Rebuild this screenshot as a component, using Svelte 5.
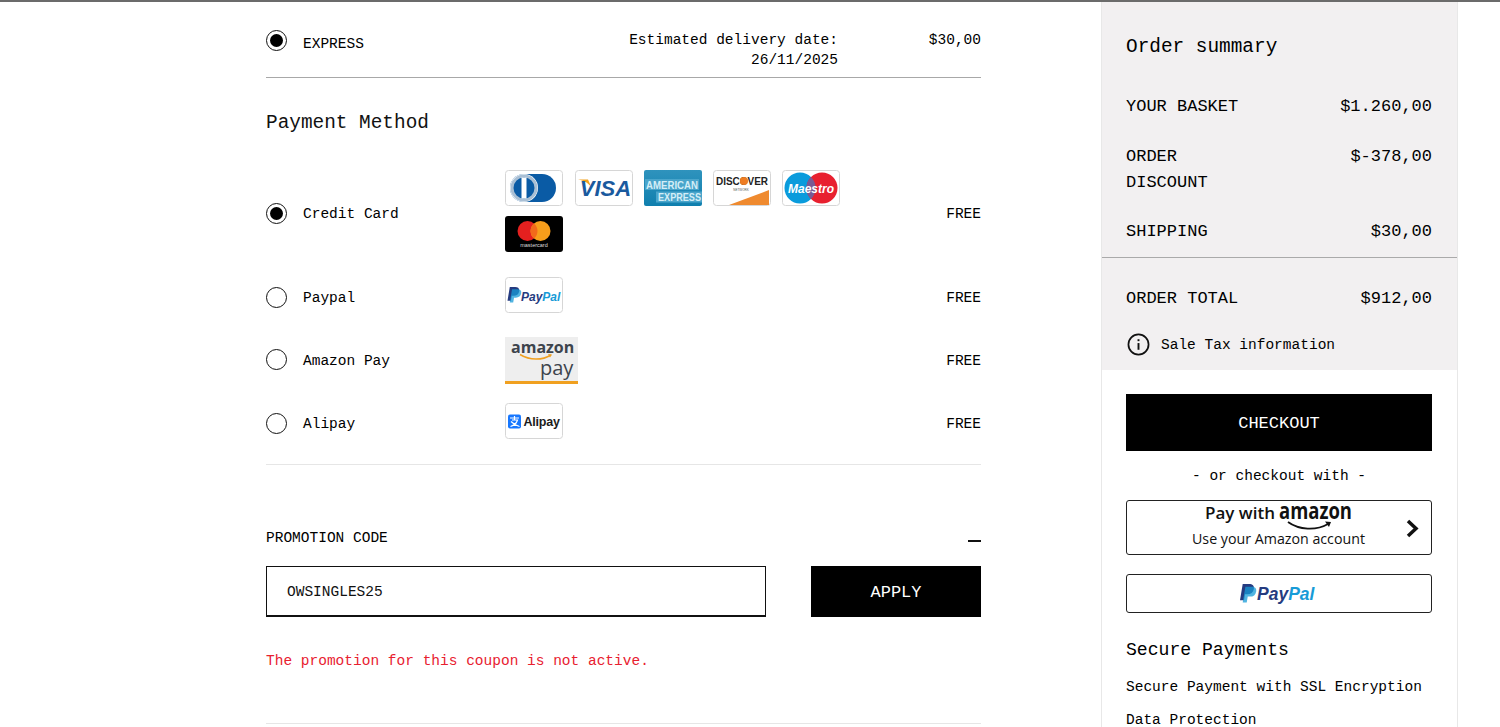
<script>
  const sidebarRows = [
    { label: "YOUR BASKET", value: "$1.260,00" },
    { label: "ORDER DISCOUNT", value: "$-378,00" },
    { label: "SHIPPING", value: "$30,00" },
  ];
  let coupon = $state("OWSINGLES25");
</script>

{#snippet radio(checked)}
  <span class="radio" class:checked></span>
{/snippet}

{#snippet ppMark(x, y, s)}
  <g transform="translate({x} {y}) scale({s})">
    <path d="M3 0h7c4 0 6 2 5.400 5.500C14.800 9.500 12 11.500 8 11.500H5.600L4.500 18H0z" fill="#253b80" />
    <path d="M6 3h7c4 0 5.500 2 5 5.200C17.400 12 14.800 14 11 14H8.600L7.500 20.500H3z" fill="#179bd7" opacity="0.75" />
  </g>
{/snippet}

<div class="page">
  <main class="main">
    <section class="shipping">
      {@render radio(true)}
      <span class="ship-label">EXPRESS</span>
      <span class="ship-date">Estimated delivery date:<br />26/11/2025</span>
      <span class="ship-price">$30,00</span>
    </section>

    <h2 class="method-title">Payment Method</h2>

    <section class="methods">
      <div class="method first">
        <div class="method-name">{@render radio(true)}<span>Credit Card</span></div>
        <div class="logos">
          <svg class="card diners" viewBox="0 0 58 36">
            <rect x="0.500" y="0.500" width="57" height="35" rx="3" fill="#fff" stroke="#d6d6d6" />
            <rect x="5" y="4" width="46" height="28" rx="14" fill="#0a5ba5" />
            <circle cx="19" cy="18" r="14" fill="#fff" />
            <circle cx="19" cy="18" r="12" fill="#0a5ba5" stroke="#a9bfd4" stroke-width="3" />
            <rect x="16.500" y="7.500" width="5" height="21" fill="#fff" />
          </svg>
          <svg class="card" viewBox="0 0 58 36">
            <rect x="0.500" y="0.500" width="57" height="35" rx="3" fill="#fff" stroke="#d6d6d6" />
            <path d="M3 9.500h10l3.500 8c-2-3.500-7-7-13.500-8z" fill="#f2a21f" />
            <text x="30.500" y="26" class="visa">VISA</text>
          </svg>
          <svg class="card" viewBox="0 0 58 36">
            <defs>
              <linearGradient id="amex" x1="0" y1="0" x2="0" y2="1">
                <stop offset="0" stop-color="#2f93bd" />
                <stop offset="1" stop-color="#0f7fae" />
              </linearGradient>
            </defs>
            <rect width="58" height="36" rx="2" fill="url(#amex)" />
            <rect x="1" y="9" width="54" height="11" fill="#4aa5cb" />
            <rect x="12" y="21.500" width="46" height="11" fill="#4aa5cb" />
            <text x="2" y="18.500" class="amex" textLength="52" lengthAdjust="spacingAndGlyphs">AMERICAN</text>
            <text x="14" y="31" class="amex" textLength="43" lengthAdjust="spacingAndGlyphs">EXPRESS</text>
          </svg>
          <svg class="card" viewBox="0 0 58 36">
            <rect x="0.500" y="0.500" width="57" height="35" rx="3" fill="#fff" stroke="#d6d6d6" />
            <text x="3" y="15" class="discover" textLength="52" lengthAdjust="spacingAndGlyphs">DISCOVER</text>
            <circle cx="31" cy="11" r="4" fill="#ee7d23" />
            <text x="28" y="21" class="discover-sub">NETWORK</text>
            <path d="M16 35L56 20v15z" fill="#ef8a2f" />
          </svg>
          <svg class="card" viewBox="0 0 58 36">
            <rect x="0.500" y="0.500" width="57" height="35" rx="3" fill="#fff" stroke="#d6d6d6" />
            <circle cx="18" cy="18" r="15.500" fill="#0a9bdc" />
            <circle cx="40" cy="18" r="15.500" fill="#e8202f" />
            <path d="M29 7a15.500 15.500 0 0 1 0 22a15.500 15.500 0 0 1 0-22z" fill="#7a5a94" />
            <text x="29" y="22.500" class="maestro">Maestro</text>
          </svg>
          <svg class="card" viewBox="0 0 58 36">
            <rect width="58" height="36" rx="3" fill="#000" />
            <circle cx="22.500" cy="15" r="10" fill="#e4201f" />
            <circle cx="35.500" cy="15" r="10" fill="#f79e1b" />
            <path d="M29 7.400a10 10 0 0 1 0 15.200a10 10 0 0 1 0-15.200z" fill="#f26a1b" />
            <text x="29" y="31" class="mc">mastercard</text>
          </svg>
        </div>
        <span class="free">FREE</span>
      </div>

      <div class="method paypal">
        <div class="method-name">{@render radio(false)}<span>Paypal</span></div>
        <div class="logos">
          <svg class="card" viewBox="0 0 58 36">
            <rect x="0.500" y="0.500" width="57" height="35" rx="3" fill="#fff" stroke="#d6d6d6" />
            {@render ppMark(2.500, 10, 0.760)}
            <text x="16" y="23.500" class="pp-small"><tspan fill="#253b80">Pay</tspan><tspan fill="#179bd7">Pal</tspan></text>
          </svg>
        </div>
        <span class="free">FREE</span>
      </div>

      <div class="method amazon">
        <div class="method-name">{@render radio(false)}<span>Amazon Pay</span></div>
        <div class="logos">
          <svg class="amazon-pay" viewBox="0 0 73 47">
            <rect width="73" height="47" fill="#eeeeee" />
            <rect y="44" width="73" height="3" fill="#f0a020" />
            <text x="6" y="16" class="az-word">amazon</text>
            <path d="M15 17.500c10 6 22 6 31 0.500" fill="none" stroke="#f0a020" stroke-width="1.500" />
            <path d="M43 17l4 0.500-2 3z" fill="#f0a020" />
            <text x="35" y="38" class="az-pay">pay</text>
          </svg>
        </div>
        <span class="free">FREE</span>
      </div>

      <div class="method">
        <div class="method-name">{@render radio(false)}<span>Alipay</span></div>
        <div class="logos">
          <svg class="card" viewBox="0 0 58 36">
            <rect x="0.500" y="0.500" width="57" height="35" rx="3" fill="#fff" stroke="#d6d6d6" />
            <rect x="3" y="11.500" width="13" height="14" rx="2" fill="#1677ff" />
            <path d="M5 15h9M9.500 13v4M5.500 23.500c3-1 6-3 7-6.500H7M6 18.500c2 2 5 4 8.500 5" fill="none" stroke="#fff" stroke-width="1.200" />
            <text x="18.500" y="23" class="alipay">Alipay</text>
          </svg>
        </div>
        <span class="free">FREE</span>
      </div>
    </section>

    <section class="promo">
      <div class="promo-head">
        <span>PROMOTION CODE</span>
        <span class="minus"></span>
      </div>
      <div class="promo-form">
        <input class="promo-input" bind:value={coupon} />
        <button class="apply">APPLY</button>
      </div>
      <p class="promo-error">The promotion for this coupon is not active.</p>
    </section>
  </main>

  <aside class="sidebar">
    <div class="summary">
      <h2 class="summary-title">Order summary</h2>
      <div class="summary-rows">
        {#each sidebarRows as row}
          <div class="summary-row">
            <span class="row-label">{row.label}</span>
            <span>{row.value}</span>
          </div>
        {/each}
      </div>
      <div class="summary-total">
        <div class="summary-row">
          <span>ORDER TOTAL</span>
          <span>$912,00</span>
        </div>
        <div class="tax">
          <svg class="info" viewBox="0 0 24 24">
            <circle cx="12" cy="12" r="10.500" fill="none" stroke="#111" stroke-width="1.800" />
            <rect x="11" y="10.500" width="2" height="7" fill="#111" />
            <rect x="11" y="6.500" width="2" height="2" fill="#111" />
          </svg>
          <span>Sale Tax information</span>
        </div>
      </div>
    </div>

    <div class="actions">
      <button class="checkout">CHECKOUT</button>
      <div class="or">- or checkout with -</div>
      <button class="wallet amazon-btn">
        <svg viewBox="0 0 304 53" class="amazon-btn-art">
          <text x="78" y="18" class="btn-pay">Pay with</text>
          <text x="152" y="18" class="btn-amazon" textLength="73" lengthAdjust="spacingAndGlyphs">amazon</text>
          <path d="M161 21c11 8 28 9 40 2" fill="none" stroke="#111" stroke-width="1.800" />
          <path d="M198 20.500l6 0.500-2 5z" fill="#111" />
          <text x="65" y="43" class="btn-use" textLength="173" lengthAdjust="spacingAndGlyphs">Use your Amazon account</text>
          <path d="M281 20l8 7.500-8 7.500" fill="none" stroke="#111" stroke-width="3.500" />
        </svg>
      </button>
      <button class="wallet paypal-btn">
        <svg viewBox="0 0 80 22" class="paypal-art">
          {@render ppMark(1, 1, 0.900)}
          <text x="18" y="17" class="pp-big"><tspan fill="#253b80">Pay</tspan><tspan fill="#179bd7">Pal</tspan></text>
        </svg>
      </button>
      <h3 class="secure-title">Secure Payments</h3>
      <div class="secure-line first-line">Secure Payment with SSL Encryption</div>
      <div class="secure-line">Data Protection</div>
    </div>
  </aside>
</div>

<style>
  :global(body) {
    margin: 0;
    background: #fff;
  }
  .page {
    height: 725px;
    overflow: hidden;
    border-top: 2px solid #6b6b6b;
    padding-left: 266px;
    display: flex;
    font-family: "Liberation Mono", monospace;
    font-size: 14.5px;
    color: #000;
  }
  .main {
    width: 715px;
    flex-shrink: 0;
  }
  .shipping {
    display: grid;
    grid-template-columns: 37px 1fr auto 143px;
    border-bottom: 1px solid #a8a8a8;
    box-sizing: border-box;
    height: 76px;
    padding-top: 29px;
  }
  .shipping .radio {
    transform: translateY(-1px);
  }
  .ship-label {
    padding-top: 5px;
  }
  .ship-date {
    text-align: right;
    line-height: 20px;
    margin-top: -1px;
  }
  .ship-price {
    text-align: right;
    margin-top: 1px;
  }
  .radio {
    display: block;
    box-sizing: border-box;
    width: 21px;
    height: 21px;
    border: 1.500px solid #111;
    border-radius: 50%;
    background: #fff;
    position: relative;
  }
  .radio.checked::after {
    content: "";
    position: absolute;
    inset: 3px;
    border-radius: 50%;
    background: #000;
  }
  .method-title {
    font-weight: 400;
    font-size: 19.400px;
    line-height: 24px;
    margin: 33px 0 35px;
    color: #111;
  }
  .methods {
    border-bottom: 1px solid #e6e6e6;
    padding-bottom: 25px;
  }
  .method {
    display: grid;
    grid-template-columns: 239px 1fr auto;
    align-items: center;
  }
  .method.first {
    margin-bottom: 25px;
  }
  .method.paypal {
    margin-bottom: 24px;
  }
  .method.amazon {
    margin-bottom: 19px;
  }
  .method-name {
    display: flex;
    align-items: center;
    gap: 16px;
    padding-top: 6px;
  }
  .method-name .radio {
    transform: translateY(-1px);
  }
  .free {
    padding-top: 6px;
  }
  .method.amazon .method-name,
  .method.amazon .free {
    padding-top: 0;
  }
  .logos {
    display: flex;
    flex-wrap: wrap;
    gap: 10px 11px;
    width: 345px;
  }
  .logos svg {
    display: block;
  }
  .card {
    width: 58px;
    height: 36px;
  }
  .card.diners {
    margin-right: 1px;
  }
  .amazon-pay {
    width: 73px;
    height: 47px;
  }
  .visa {
    font: italic 700 22px "Liberation Sans", sans-serif;
    fill: #1a5a9e;
    text-anchor: middle;
  }
  .amex {
    font: 700 11px "Liberation Sans", sans-serif;
    fill: #d4eef7;
  }
  .discover {
    font: 700 11px "Liberation Sans", sans-serif;
    fill: #222;
  }
  .discover-sub {
    font: 3px "Liberation Sans", sans-serif;
    fill: #555;
    text-anchor: middle;
  }
  .maestro {
    font: italic 700 12px "Liberation Sans", sans-serif;
    fill: #fff;
    text-anchor: middle;
  }
  .mc {
    font: 5.500px "Liberation Sans", sans-serif;
    fill: #ddd;
    text-anchor: middle;
  }
  .pp-small {
    font: italic 700 12px "Liberation Sans", sans-serif;
  }
  .pp-big {
    font: italic 700 17.500px "Liberation Sans", sans-serif;
  }
  .az-word {
    font: 700 16px "Open Sans", sans-serif;
    fill: #3d444c;
  }
  .az-pay {
    font: 500 20px "Open Sans", sans-serif;
    fill: #3d444c;
  }
  .alipay {
    font: 700 12.500px "Liberation Sans", sans-serif;
    fill: #1b1b1b;
    letter-spacing: -0.200px;
  }
  .promo {
    padding-top: 64px;
    border-bottom: 1px solid #e6e6e6;
    height: 259px;
    box-sizing: border-box;
  }
  .promo-head {
    display: flex;
    justify-content: space-between;
    align-items: center;
    line-height: 18px;
    margin-bottom: 19px;
  }
  .minus {
    width: 13px;
    height: 2px;
    background: #111;
    margin-top: 6px;
  }
  .promo-form {
    display: flex;
    justify-content: space-between;
  }
  .promo-input {
    width: 500px;
    height: 51px;
    box-sizing: border-box;
    border: 1.500px solid #111;
    border-bottom-width: 2px;
    padding: 2px 20px 0;
    font: inherit;
    color: #111;
    outline: none;
    background: #fff;
    border-radius: 0;
  }
  .apply {
    width: 170px;
    height: 51px;
    padding: 2px 0 0;
    background: #000;
    color: #fff;
    border: 0;
    font: inherit;
    font-size: 17px;
  }
  .promo-error {
    margin: 34px 0 0;
    line-height: 20px;
    color: #e8202f;
  }

  .sidebar {
    width: 355px;
    margin-left: 120px;
    flex-shrink: 0;
    border-left: 1px solid #e8e8e8;
    border-right: 1px solid #e8e8e8;
    font-size: 17px;
  }
  .summary {
    background: #f2f0f1;
    height: 368px;
  }
  .summary-title {
    font-weight: 400;
    font-size: 19.400px;
    line-height: 24px;
    margin: 0;
    padding: 33px 24px 0;
  }
  .summary-rows {
    padding: 35px 25px 0 24px;
    height: 199px;
    box-sizing: border-box;
    border-bottom: 1px solid #aaa;
    display: flex;
    flex-direction: column;
    gap: 24px;
  }
  .summary-row {
    display: flex;
    justify-content: space-between;
    line-height: 26px;
  }
  .summary-rows .summary-row:last-child {
    margin-top: -1px;
  }
  .row-label {
    max-width: 130px;
  }
  .summary-total {
    padding: 28px 25px 0 24px;
  }
  .tax {
    display: flex;
    align-items: center;
    gap: 11px;
    font-size: 14.500px;
    margin-top: 21px;
    padding-left: 1px;
  }
  .info {
    width: 23px;
    height: 23px;
  }
  .actions {
    padding: 24px 25px 0 24px;
    display: flex;
    flex-direction: column;
  }
  .checkout {
    height: 57px;
    padding: 1px 0 0;
    background: #000;
    color: #fff;
    border: 0;
    font: inherit;
    font-size: 17px;
  }
  .or {
    text-align: center;
    font-size: 14.500px;
    line-height: 20px;
    margin: 15px 0 14px;
  }
  .wallet {
    padding: 0;
    background: #fff;
    border: 1px solid #222;
    border-radius: 3px;
    display: flex;
    align-items: center;
    justify-content: center;
  }
  .amazon-btn {
    height: 55px;
    margin-bottom: 19px;
  }
  .amazon-btn-art {
    width: 304px;
    height: 53px;
    flex-shrink: 0;
  }
  .paypal-btn {
    height: 39px;
  }
  .paypal-art {
    width: 80px;
    height: 22px;
  }
  .btn-pay {
    font: 600 17px "Open Sans", sans-serif;
    fill: #111;
  }
  .btn-amazon {
    font: 700 23px "Open Sans", sans-serif;
    fill: #111;
  }
  .btn-use {
    font: 500 15px "Open Sans", sans-serif;
    fill: #111;
  }
  .secure-title {
    font-weight: 400;
    font-size: 18.100px;
    line-height: 24px;
    margin: 25px 0 0;
  }
  .secure-line {
    font-size: 14.500px;
    line-height: 20px;
    margin-top: 13px;
  }
  .secure-line.first-line {
    margin-top: 15px;
  }
</style>
